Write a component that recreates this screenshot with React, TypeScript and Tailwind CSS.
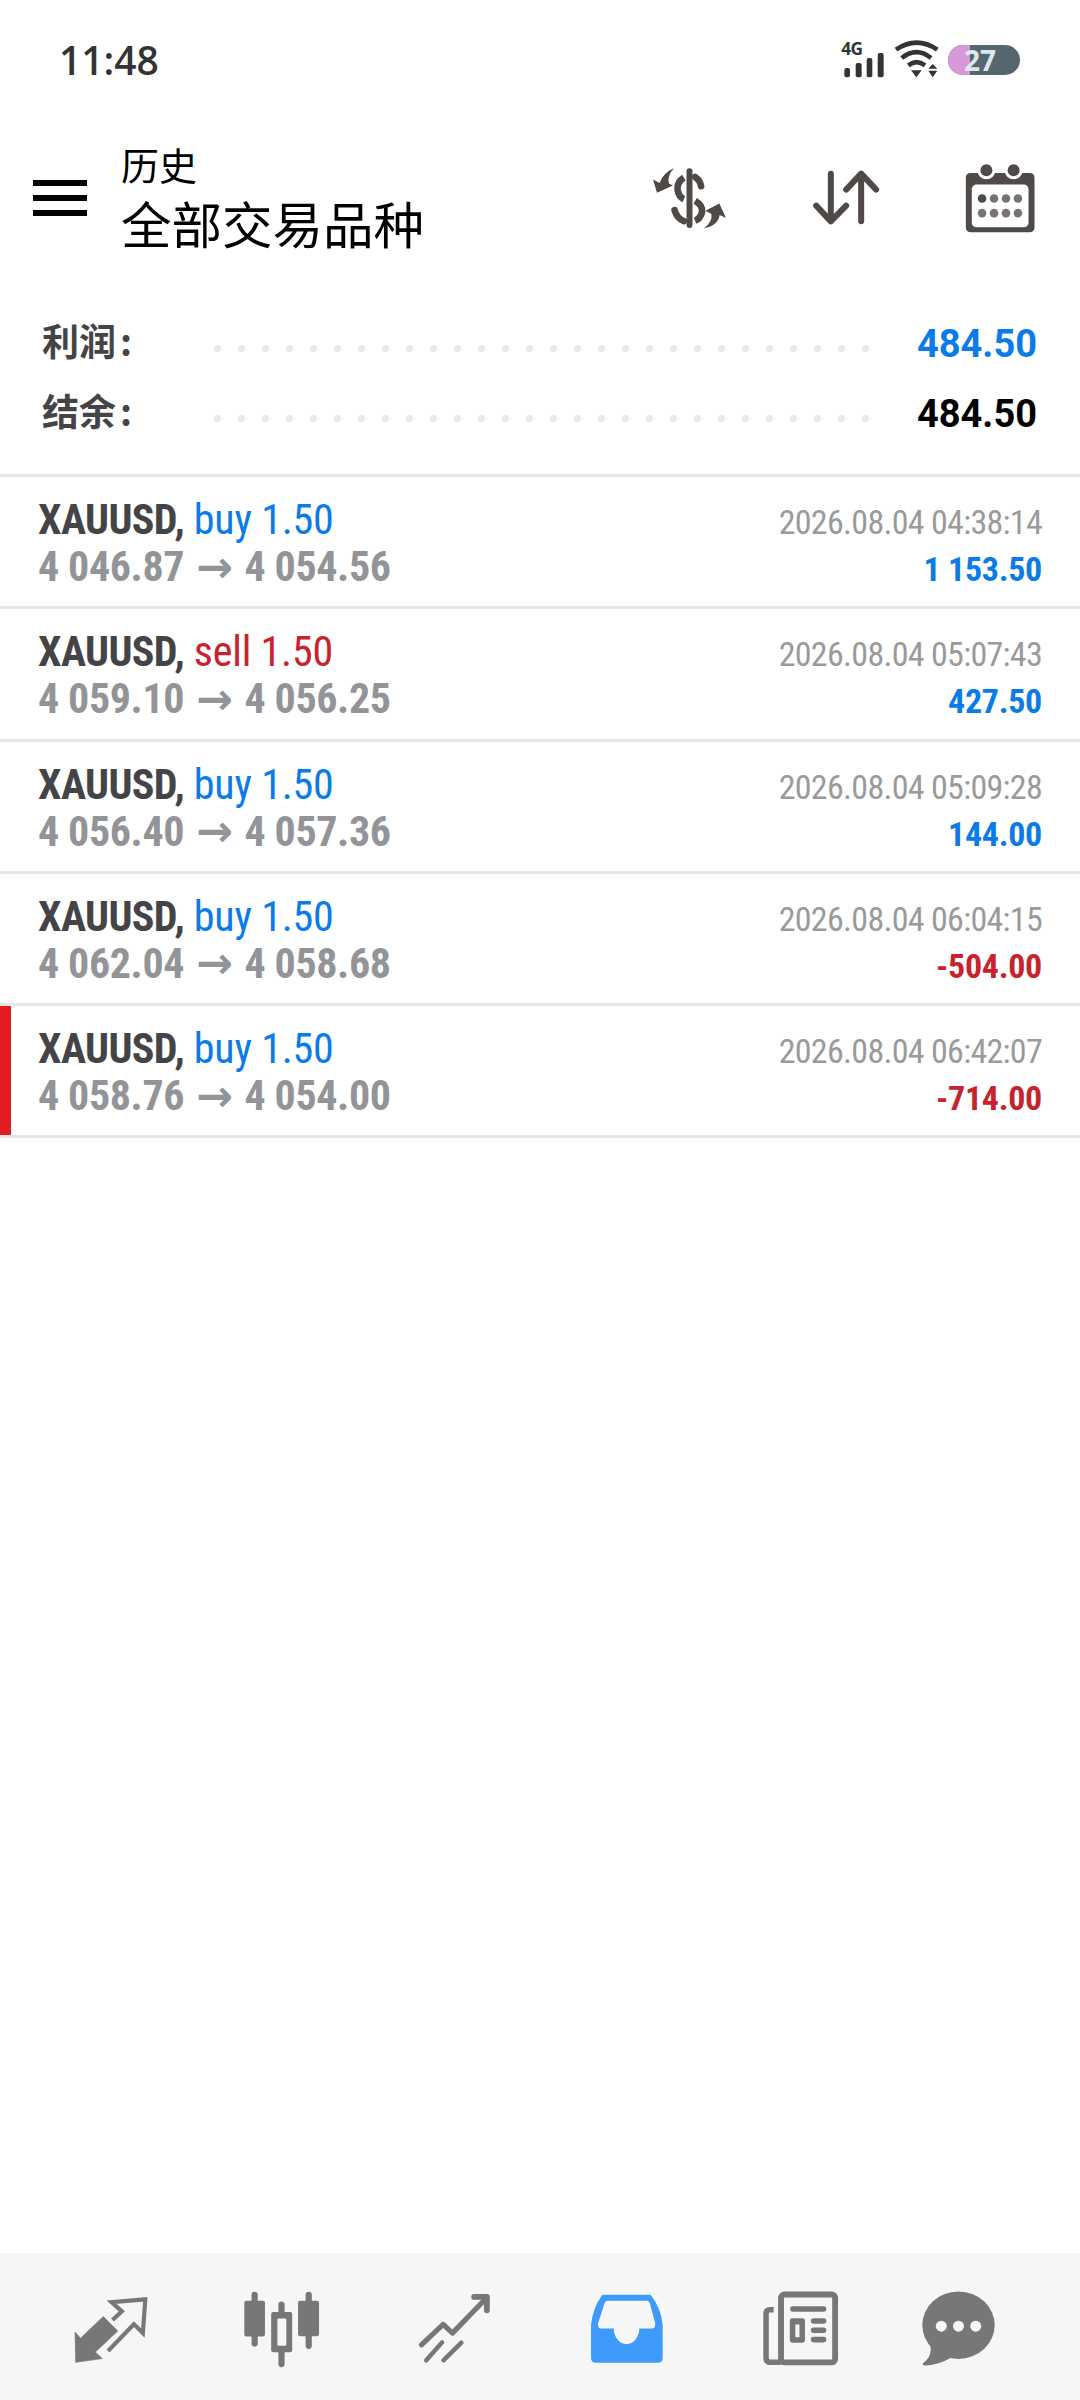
import React from "react";

const ICON = "#4f4a48";
const NAV = "#777777";
const BAR = "#f6f6f6";
const dots = Array.from({ length: 28 });

const trades = [
  { side: "buy", from: "4 046.87", to: "4 054.56", time: "2026.08.04 04:38:14", pnl: "1 153.50" },
  { side: "sell", from: "4 059.10", to: "4 056.25", time: "2026.08.04 05:07:43", pnl: "427.50" },
  { side: "buy", from: "4 056.40", to: "4 057.36", time: "2026.08.04 05:09:28", pnl: "144.00" },
  { side: "buy", from: "4 062.04", to: "4 058.68", time: "2026.08.04 06:04:15", pnl: "-504.00" },
  { side: "buy", from: "4 058.76", to: "4 054.00", time: "2026.08.04 06:42:07", pnl: "-714.00", flag: true },
];

function Dots() {
  return (
    <div className="mt-2 flex w-[655px] flex-none justify-between">
      {dots.map((_, i) => (
        <div key={i} className="h-[7px] w-[7px] rounded-full bg-[#e8e8e8]" />
      ))}
    </div>
  );
}

function Row({ t }: { t: (typeof trades)[number] }) {
  const sideColor = t.side === "buy" ? "text-[#0a7be8]" : "text-[#c8232c]";
  const pnlColor = t.pnl.startsWith("-") ? "text-[#c8232c]" : "text-[#0a7be8]";
  return (
    <div className="relative flex h-[132.3px] justify-between border-b-[3px] border-[#e6e6e6] pl-[38px] pr-[38px] pt-[20px] [font-family:Roboto,sans-serif] [font-stretch:75%]">
      {t.flag && <div className="absolute bottom-0 left-0 top-0 w-[11px] bg-[#e31c23]" />}
      <div className="flex flex-col">
        <div className="whitespace-nowrap text-[42px] leading-[46px]">
          <span className="font-bold tracking-[-0.6px] text-[#444446]">XAUUSD,</span>{" "}
          <span className={`tracking-[-0.2px] ${sideColor}`}>
            {t.side} 1.50
          </span>
        </div>
        <div className="flex items-center whitespace-nowrap text-[42px] font-bold leading-[47px] tracking-[-0.4px] text-[#929497]">
          <span>{t.from}</span>
          <span className="mx-[12px] text-[44px] leading-none [font-family:'DejaVu_Sans',sans-serif] [font-stretch:100%]">→</span>
          <span>{t.to}</span>
        </div>
      </div>
      <div className="flex flex-col items-end pt-[2px]">
        <div className="whitespace-nowrap text-[34px] leading-[47px] tracking-[-0.7px] text-[#9a9a9a]">{t.time}</div>
        <div className={`whitespace-nowrap text-[34px] font-bold leading-[47px] tracking-[-0.3px] ${pnlColor}`}>{t.pnl}</div>
      </div>
    </div>
  );
}

export default function App() {
  return (
    <div className="flex h-[2400px] w-[1080px] flex-col overflow-hidden bg-white [font-family:Roboto,'Noto_Sans_CJK_SC',sans-serif]">
      {/* status bar */}
      <div className="flex h-[120px] flex-none items-center justify-between pl-[59px] pr-[60px]">
        <span className="text-[39px] font-semibold text-[#333333] [font-family:'Open_Sans',sans-serif]">11:48</span>
        <div className="flex items-center">
          <svg viewBox="720 100 300 140" className="mb-[6.67px] h-[46.67px] w-[100px]">
            <text x="724" y="165" fontSize="52" fontWeight="700" fill="#333" fontFamily="Open Sans, sans-serif" letterSpacing="-2">4G</text>
            <rect x="733" y="205" width="17" height="28" rx="6" fill="#333" />
            <rect x="767" y="190" width="18" height="43" rx="6" fill="#333" />
            <rect x="800" y="175" width="17" height="58" rx="6" fill="#333" />
            <rect x="833" y="160" width="18" height="73" rx="6" fill="#333" />
            <path d="M888 150 Q950 108 1012 150 M905 175 Q950 140 993 175 M925 197 Q950 178 975 197" fill="none" stroke="#333" strokeWidth="14" />
            <path d="M933 212 L965 212 L949 233Z M985 207 L998 193 L1012 207Z M985 213 L1012 213 L998 233Z" fill="#333" />
          </svg>
          <div className="relative ml-[8px] flex h-[30px] w-[72px] items-center rounded-full bg-[#55666f]">
            <div className="h-full w-[22px] rounded-l-full bg-[#d898d8]" />
            <span className="absolute left-[16px] top-[1px] text-[28px] font-bold leading-[28px] text-[#dfe7ee] [font-family:'Open_Sans',sans-serif]">27</span>
          </div>
        </div>
      </div>

      {/* toolbar */}
      <div className="flex h-[156px] flex-none items-center justify-between pl-[33px] pr-[42px]">
        <div className="flex items-center">
          <div className="flex h-[36px] w-[54px] flex-col justify-between">
            <div className="h-[6px] bg-black" />
            <div className="h-[6px] bg-black" />
            <div className="h-[6px] bg-black" />
          </div>
          <div className="ml-[34px] flex flex-col text-black [font-family:'Noto_Sans_CJK_SC',sans-serif]">
            <span className="mt-[2px] text-[38px] leading-[46px]">历史</span>
            <span className="text-[50.5px] leading-[70px]">全部交易品种</span>
          </div>
        </div>
        <div className="flex items-center">
          <svg viewBox="160 500 220 190" className="h-[63px] w-[73px]">
            <g fill="none" stroke={ICON} strokeWidth="20" strokeLinecap="round">
              <path d="M270 513 V675" strokeWidth="18" />
              <path d="M253 532 Q232 545 234 568 Q237 590 253 597" strokeLinecap="butt" />
              <path d="M287 530 Q302 540 305 558" />
              <path d="M287 602 Q310 615 308 635 Q304 655 287 662" strokeLinecap="butt" />
              <path d="M253 663 Q232 655 225 630" />
            </g>
            <path d="M224 503 Q202 525 208 550 L220 556 L172 578 L160 538 L180 548 Q190 518 224 503Z" fill={ICON} />
            <path d="M314 685 Q340 665 336 642 L318 632 L360 610 L380 654 L361 645 Q356 677 314 685Z" fill={ICON} />
          </svg>
          <svg viewBox="630 505 215 180" className="ml-[84px] h-[60px] w-[72px]">
            <path d="M692 522 V665 M648 618 L692 665 L738 618 M783 522 V665 M738 570 L783 522 L828 570" fill="none" stroke={ICON} strokeWidth="18" strokeLinecap="round" strokeLinejoin="round" />
          </svg>
          <svg viewBox="1090 480 225 220" className="ml-[81px] h-[73px] w-[75px]">
            <rect x="1098" y="513" width="207" height="179" rx="14" fill={ICON} />
            <rect x="1116" y="548" width="171" height="129" rx="14" fill="#fff" />
            <circle cx="1160" cy="505" r="27" fill="#fff" />
            <circle cx="1242" cy="505" r="27" fill="#fff" />
            <rect x="1090" y="480" width="225" height="33" fill="#fff" />
            <circle cx="1160" cy="505" r="18" fill={ICON} />
            <circle cx="1242" cy="505" r="18" fill={ICON} />
            <circle cx="1147" cy="590" r="13" fill={ICON} />
            {[1183, 1219, 1255].map((x) => <circle key={x} cx={x} cy="590" r="13" fill="#787372" />)}
            {[1147, 1183, 1219, 1255].map((x) => <circle key={x} cx={x} cy="634" r="13" fill="#787372" />)}
          </svg>
        </div>
      </div>

      {/* summary */}
      <div className="mt-[33px] flex flex-none flex-col pb-[25px] pl-[42px] pr-[43px]">
        <div className="flex h-[70px] items-center">
          <span className="-mt-[6px] w-[172px] flex-none whitespace-nowrap text-[37px] font-bold text-[#444446] [font-family:'Noto_Sans_CJK_SC',sans-serif]">利润<span className="ml-[4px]">:</span></span>
          <Dots />
          <span className="ml-auto text-[38px] font-bold text-[#0a7be8]">484.50</span>
        </div>
        <div className="flex h-[70px] items-center">
          <span className="-mt-[6px] w-[172px] flex-none whitespace-nowrap text-[37px] font-bold text-[#444446] [font-family:'Noto_Sans_CJK_SC',sans-serif]">结余<span className="ml-[4px]">:</span></span>
          <Dots />
          <span className="ml-auto text-[38px] font-bold text-black">484.50</span>
        </div>
      </div>

      {/* trades */}
      <div className="flex-none border-t-[3px] border-[#e6e6e6]">
        {trades.map((t, i) => <Row key={i} t={t} />)}
      </div>

      <div className="flex-1" />

      {/* nav */}
      <div className="flex h-[147px] flex-none items-start bg-[#f6f6f6] pt-[26px]">
        <svg viewBox="184 111 270 270" className="ml-[63.5px] h-[93px] w-[93px] flex-none">
          <path d="M216 265 L232 283 L298 220 L340 262 L275 323 L295 342 L218 353Z" fill={NAV} stroke={NAV} strokeWidth="2" strokeLinejoin="round" />
          <path d="M325 230 L352 205 L322 178 L420 170 L413 268 L387 242 L312 320" fill="none" stroke={NAV} strokeWidth="12" />
        </svg>
        <svg viewBox="682 111 270 270" className="ml-[78px] h-[93px] w-[93px] flex-none">
          <path d="M739 157 V298 M817 185 V358 M896 157 V305" stroke={NAV} strokeWidth="18" strokeLinecap="round" />
          <rect x="709" y="174" width="60" height="104" rx="6" fill={NAV} />
          <rect x="787" y="207" width="61" height="117" rx="6" fill={NAV} />
          <rect x="805" y="226" width="26" height="79" rx="4" fill={BAR} />
          <rect x="865" y="174" width="61" height="103" rx="6" fill={NAV} />
        </svg>
        <svg viewBox="1183 111 270 270" className="ml-[80px] h-[93px] w-[93px] flex-none">
          <path d="M1222 302 L1285 243 L1312 268 L1410 167" fill="none" stroke={NAV} strokeWidth="15" strokeLinecap="round" strokeLinejoin="round" />
          <path d="M1375 163 L1412 163 L1412 202" fill="none" stroke={NAV} strokeWidth="17" strokeLinecap="round" strokeLinejoin="round" />
          <path d="M1236 347 L1282 295 M1286 347 L1338 296" stroke={NAV} strokeWidth="13" strokeLinecap="round" />
        </svg>
        <svg viewBox="115 111 270 270" className="ml-[79px] h-[93px] w-[93px] flex-none">
          <path d="M147 245 Q152 195 180 157 H320 Q350 195 355 245 V340 Q355 354 341 354 H161 Q147 354 147 340Z" fill="#3e9bfc" />
          <path d="M195 174 H310 Q316 174 318 182 L333 238 Q336 255 322 255 H287 A37 45 0 0 1 213 255 H178 Q164 255 168 238 L186 182 Q188 174 195 174Z" fill={BAR} />
        </svg>
        <svg viewBox="620 111 270 270" className="ml-[81px] h-[93px] w-[93px] flex-none">
          <rect x="698.5" y="156" width="157" height="197" rx="10" fill="none" stroke={NAV} strokeWidth="17" />
          <path d="M677 200 H666 Q655 200 655 212 V340 Q655 353 668 353 H698" fill="none" stroke={NAV} strokeWidth="16" />
          <path d="M733 198 H822 M793 233 H822 M793 260 H822 M793 287 H822" stroke={NAV} strokeWidth="16" strokeLinecap="round" />
          <rect x="724" y="225" width="44" height="71" rx="7" fill={NAV} />
          <rect x="740" y="243" width="12" height="37" fill={BAR} />
        </svg>
        <svg viewBox="1078 111 270 270" className="ml-[65px] h-[93px] w-[93px] flex-none">
          <ellipse cx="1213" cy="245" rx="105" ry="98" fill={NAV} />
          <path d="M1130 300 Q1140 335 1108 357 Q1112 364 1120 362 Q1155 360 1190 340Z" fill={NAV} />
          <circle cx="1163" cy="248" r="16" fill={BAR} />
          <circle cx="1213" cy="248" r="16" fill={BAR} />
          <circle cx="1263" cy="248" r="16" fill={BAR} />
        </svg>
      </div>
    </div>
  );
}
